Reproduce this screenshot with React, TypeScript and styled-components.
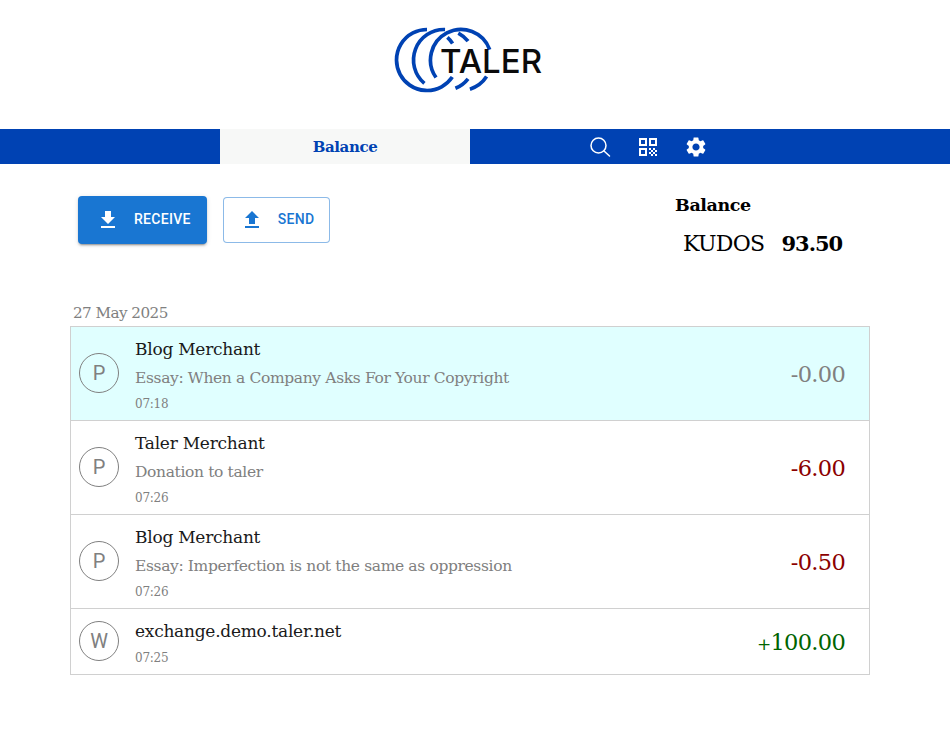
import React from "react";
import styled, { createGlobalStyle } from "styled-components";

const GlobalStyle = createGlobalStyle`
  html, body {
    margin: 0;
    padding: 0;
    background: #fff;
    font-family: "DejaVu Serif", serif;
    color: #000;
  }
`;

const Page = styled.div`
  width: 950px;
  height: 740px;
  overflow: hidden;
`;

const Header = styled.header`
  height: 129px;
  display: flex;
  justify-content: center;
  align-items: flex-start;
`;

const LogoBox = styled.div`
  position: relative;
  width: 152px;
  height: 72px;
  margin-top: 25px;
  margin-left: -14px;
  svg {
    display: block;
  }
`;

const LogoText = styled.span`
  position: absolute;
  left: 48px;
  top: 16px;
  font-family: Inter, sans-serif;
  font-size: 33px;
  line-height: 40px;
  font-weight: 500;
  color: #0b0b0b;
`;

const NavBar = styled.nav`
  height: 35px;
  background: #0042b3;
  display: flex;
  padding-left: 220px;
`;

const Tab = styled.a`
  width: 250px;
  background: #f7f8f7;
  color: #0042b3;
  font-size: 15px;
  letter-spacing: -0.4px;
  font-weight: 700;
  display: flex;
  align-items: center;
  justify-content: center;
  text-decoration: none;
`;

const NavIcons = styled.div`
  display: flex;
  align-items: center;
  gap: 24px;
  padding-left: 119px;
  color: #fff;
  svg {
    display: block;
  }
`;

const Main = styled.main`
  width: 800px;
  margin-left: 70px;
`;

const Top = styled.section`
  height: 134px;
  display: flex;
  justify-content: space-between;
`;

const Actions = styled.div`
  display: flex;
  align-items: flex-start;
  gap: 16px;
  padding: 32px 0 0 8px;
`;

const Button = styled.button<{ $primary?: boolean }>`
  height: ${(p) => (p.$primary ? "48px" : "46px")};
  margin-top: ${(p) => (p.$primary ? "0" : "1px")};
  padding: 0 ${(p) => (p.$primary ? "16px" : "15px")} 0 ${(p) => (p.$primary ? "18px" : "16px")};
  display: flex;
  align-items: center;
  gap: 14px;
  border-radius: 4px;
  font-family: Roboto, sans-serif;
  font-size: 14px;
  font-weight: 500;
  letter-spacing: 0.3px;
  color: ${(p) => (p.$primary ? "#fff" : "#1976d2")};
  background: ${(p) => (p.$primary ? "#1976d2" : "#fff")};
  border: ${(p) => (p.$primary ? "none" : "1px solid rgba(25, 118, 210, 0.5)")};
  box-shadow: ${(p) =>
    p.$primary
      ? "0 3px 1px -2px rgba(0,0,0,.2), 0 2px 2px 0 rgba(0,0,0,.14), 0 1px 5px 0 rgba(0,0,0,.12)"
      : "none"};
  svg {
    display: block;
  }
  span {
    margin-top: -2px;
  }
`;

const BalanceBox = styled.div`
  width: 195px;
  padding-top: 29px;
`;

const BalanceTitle = styled.div`
  font-size: 17.5px;
  letter-spacing: -0.4px;
  font-weight: 700;
  line-height: 24px;
`;

const BalanceLine = styled.div`
  display: flex;
  align-items: baseline;
  gap: 17px;
  margin-top: 13px;
  margin-left: 8px;
  font-size: 22px;
  letter-spacing: -0.7px;
  line-height: 28px;
`;

const Amount = styled.span`
  font-size: 21px;
  letter-spacing: -1px;
  font-weight: 700;
`;

const DateLabel = styled.div`
  height: 33px;
  padding: 10px 0 0 3px;
  box-sizing: border-box;
  margin-top: -5px;
  font-size: 15.2px;
  letter-spacing: -0.55px;
  line-height: 20px;
  color: #808080;
`;

const List = styled.div`
  border: 1px solid #d0d0d0;
  border-bottom: none;
`;

const Row = styled.div<{ $tall?: boolean; $active?: boolean }>`
  height: ${(p) => (p.$tall ? "93px" : "65px")};
  display: flex;
  align-items: center;
  padding: 0 24px 0 8px;
  background: ${(p) => (p.$active ? "#e0ffff" : "#fff")};
  border-bottom: 1px solid #d0d0d0;
`;

const Avatar = styled.div`
  width: 38px;
  height: 38px;
  flex: none;
  margin-bottom: 1px;
  border: 1px solid #808080;
  border-radius: 50%;
  display: flex;
  align-items: center;
  justify-content: center;
  color: #808080;
  font-family: Roboto, sans-serif;
  font-size: 20px;
`;

const Info = styled.div`
  flex: 1;
  padding: 3px 0 0 16px;
  display: flex;
  flex-direction: column;
`;

const Title = styled.div`
  margin-top: -1px;
  font-size: 17px;
  letter-spacing: -0.25px;
  line-height: 24px;
  color: #1a1a1a;
`;

const Subtitle = styled.div`
  font-size: 15.5px;
  letter-spacing: -0.36px;
  line-height: 20px;
  margin-top: 7px;
  color: #808080;
`;

const Time = styled.div<{ $tight?: boolean }>`
  font-size: 12px;
  letter-spacing: -0.25px;
  line-height: 16px;
  margin-top: ${(p) => (p.$tight ? "8px" : "7px")};
  color: #808080;
`;

const Value = styled.div<{ $color: string }>`
  font-size: 22.5px;
  letter-spacing: -0.7px;
  color: ${(p) => p.$color};
`;

// DejaVu's plus sign is much wider than the digits around it
const Plus = styled.span`
  font-size: 17px;
`;

const Search = () => (
  <svg width="23" height="22" viewBox="0 0 23 22" fill="none" stroke="#fff" strokeWidth="1.5" strokeLinecap="round">
    <circle cx="9.5" cy="9.5" r="7.5" />
    <path d="M15 15l5.5 5" />
  </svg>
);

const Qr = () => (
  <svg width="24" height="24" viewBox="0 0 24 24" fill="#fff">
    <path d="M3 11h8V3H3v8zm2-6h4v4H5V5zM3 21h8v-8H3v8zm2-6h4v4H5v-4zM13 3v8h8V3h-8zm6 6h-4V5h4v4zM19 19h2v2h-2zM13 13h2v2h-2zM15 15h2v2h-2zM13 17h2v2h-2zM15 19h2v2h-2zM17 17h2v2h-2zM17 13h2v2h-2zM19 15h2v2h-2z" />
  </svg>
);

const Gear = () => (
  <svg width="24" height="24" viewBox="0 0 24 24" fill="#fff">
    <path d="M19.14 12.94c.04-.3.06-.61.06-.94 0-.32-.02-.64-.07-.94l2.03-1.58a.49.49 0 0 0 .12-.61l-1.92-3.32a.488.488 0 0 0-.59-.22l-2.39.96c-.5-.38-1.03-.7-1.62-.94l-.36-2.54a.484.484 0 0 0-.48-.41h-3.84c-.24 0-.43.17-.47.41l-.36 2.54c-.59.24-1.13.57-1.62.94l-2.39-.96c-.22-.08-.47 0-.59.22L2.74 8.87c-.12.21-.08.47.12.61l2.03 1.58c-.05.3-.09.63-.09.94s.02.64.07.94l-2.03 1.58a.49.49 0 0 0-.12.61l1.92 3.32c.12.22.37.29.59.22l2.39-.96c.5.38 1.03.7 1.62.94l.36 2.54c.05.24.24.41.48.41h3.84c.24 0 .44-.17.47-.41l.36-2.54c.59-.24 1.13-.56 1.62-.94l2.39.96c.22.08.47 0 .59-.22l1.92-3.32c.12-.22.07-.47-.12-.61l-2.01-1.58zM12 15.6c-1.98 0-3.6-1.62-3.6-3.6s1.62-3.6 3.6-3.6 3.6 1.62 3.6 3.6-1.62 3.6-3.6 3.6z" />
  </svg>
);

const Download = () => (
  <svg width="24" height="24" viewBox="0 0 24 24" fill="currentColor">
    <path d="M19 9h-4V3H9v6H5l7 7 7-7zM5 18v2h14v-2H5z" />
  </svg>
);

const Upload = () => (
  <svg width="24" height="24" viewBox="0 0 24 24" fill="currentColor">
    <path d="M9 16h6v-6h4l-7-7-7 7h4v6zm-4 2h14v2H5v-2z" />
  </svg>
);

const arc = (cx: number, a0: number, a1: number) => {
  const r = 30.5;
  const cy = 35;
  const rad = (d: number) => (d * Math.PI) / 180;
  const x0 = cx + r * Math.cos(rad(a0));
  const y0 = cy + r * Math.sin(rad(a0));
  const x1 = cx + r * Math.cos(rad(a1));
  const y1 = cy + r * Math.sin(rad(a1));
  const large = a1 - a0 > 180 ? 1 : 0;
  return `M${x0.toFixed(2)} ${y0.toFixed(2)}A${r} ${r} 0 ${large} 1 ${x1.toFixed(2)} ${y1.toFixed(2)}`;
};

const Logo = () => (
  <LogoBox>
    <svg width="100" height="72" viewBox="0 0 100 72" fill="none" stroke="#0042b3" strokeWidth="3.7">
      {/* three rings, each broken where it passes behind the next */}
      <path d={arc(35, 34, 270)} />
      <path d={arc(35, 312, 327)} />
      <path d={arc(52, 130, 272)} />
      <path d={arc(52, 38, 68)} />
      <path d={arc(52, 298, 322)} />
      <path d={arc(69, 145, 340)} />
      <path d={arc(69, 33, 73)} />
    </svg>
    <LogoText>TALER</LogoText>
  </LogoBox>
);

type Tx = {
  letter: string;
  title: string;
  subtitle?: string;
  time: string;
  value: string;
  color: string;
  active?: boolean;
};

const rows: Tx[] = [
  { letter: "P", title: "Blog Merchant", subtitle: "Essay: When a Company Asks For Your Copyright", time: "07:18", value: "-0.00", color: "#808080", active: true },
  { letter: "P", title: "Taler Merchant", subtitle: "Donation to taler", time: "07:26", value: "-6.00", color: "#8b0000" },
  { letter: "P", title: "Blog Merchant", subtitle: "Essay: Imperfection is not the same as oppression", time: "07:26", value: "-0.50", color: "#8b0000" },
  { letter: "W", title: "exchange.demo.taler.net", time: "07:25", value: "+100.00", color: "#006400" },
];

export default function App() {
  return (
    <Page>
      <GlobalStyle />
      <Header>
        <Logo />
      </Header>
      <NavBar>
        <Tab href="#">Balance</Tab>
        <NavIcons>
          <Search />
          <Qr />
          <Gear />
        </NavIcons>
      </NavBar>
      <Main>
        <Top>
          <Actions>
            <Button $primary>
              <Download />
              <span>RECEIVE</span>
            </Button>
            <Button>
              <Upload />
              <span>SEND</span>
            </Button>
          </Actions>
          <BalanceBox>
            <BalanceTitle>Balance</BalanceTitle>
            <BalanceLine>
              <span>KUDOS</span>
              <Amount>93.50</Amount>
            </BalanceLine>
          </BalanceBox>
        </Top>
        <DateLabel>27 May 2025</DateLabel>
        <List>
          {rows.map((r, i) => (
            <Row key={i} $tall={!!r.subtitle} $active={r.active}>
              <Avatar>{r.letter}</Avatar>
              <Info>
                <Title>{r.title}</Title>
                {r.subtitle && <Subtitle>{r.subtitle}</Subtitle>}
                <Time $tight={!!r.subtitle}>{r.time}</Time>
              </Info>
              <Value $color={r.color}>
                {r.value.startsWith("+") ? (
                  <>
                    <Plus>+</Plus>
                    {r.value.slice(1)}
                  </>
                ) : (
                  r.value
                )}
              </Value>
            </Row>
          ))}
        </List>
      </Main>
    </Page>
  );
}
